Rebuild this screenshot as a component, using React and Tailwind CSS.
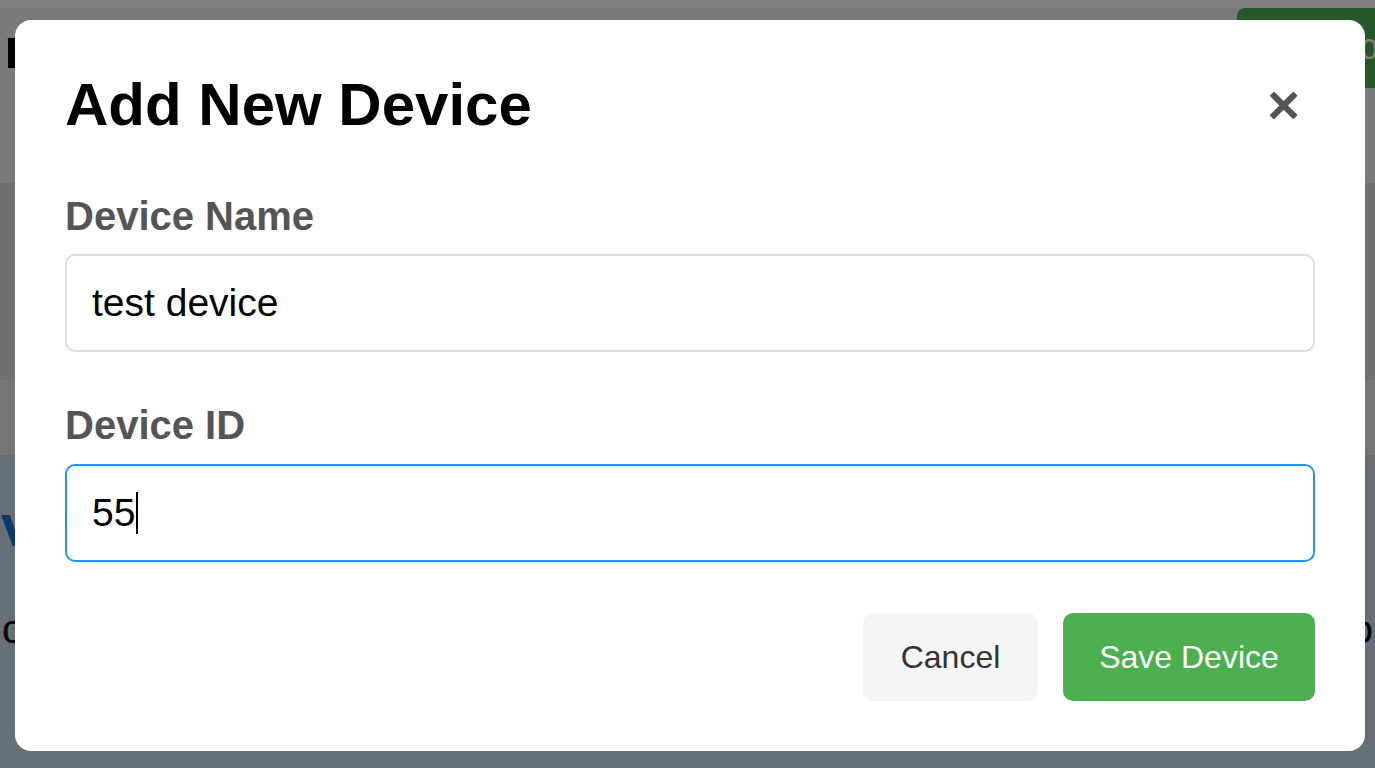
import { useState } from "react"

const FONT = { fontFamily: '"Liberation Sans", Arial, sans-serif' }

function Background() {
  return (
    <div className="min-h-screen bg-white" style={FONT}>
      <div className="pt-[8px]">
        <div className="flex h-[175px] items-start justify-between bg-[#f4f4f4]">
          <h1 className="mt-[11px] pl-[4px] text-[58px] font-bold leading-none text-black">
            n
          </h1>
          <button className="h-[80px] w-[138px] rounded-l-lg bg-[#4caf50] pl-[124px] text-left text-[30px] text-white">
            0
          </button>
        </div>
        <div className="h-[197px] bg-[#e0e0e0]" />
        <div className="h-[75px] bg-[#ececec]" />
        <div className="h-[313px] bg-[#cedcea] pt-[36px]">
          <p className="pl-[1px] text-[60px] font-bold leading-[69px] text-[#1a70d8]">v</p>
          <div className="mt-[46px] flex justify-between px-[2px] text-[40px] leading-[46px] text-black">
            <span>c</span>
            <span>o</span>
          </div>
        </div>
      </div>
    </div>
  )
}

export default function App() {
  const [name] = useState("test device")
  const [deviceId] = useState("55")

  return (
    <div className="relative">
      <Background />
      <div className="fixed inset-0 bg-black/50" style={FONT}>
        <div className="ml-[15px] mt-[20px] w-[1350px] rounded-[16px] bg-white p-[50px]">
          <div className="flex items-center justify-between">
            <h2 className="text-[60px] font-bold leading-[69px] text-black">
              Add New Device
            </h2>
            <button className="mr-[15px] text-[56px] font-bold leading-none text-[#555]">
              ×
            </button>
          </div>

          <label className="mt-[54px] block text-[40px] font-bold leading-[46px] text-[#555]">
            Device Name
          </label>
          <div className="mt-[15px] flex h-[98px] items-center rounded-[10px] border-2 border-[#ddd] px-[25px] text-[39px] text-black">
            {name}
          </div>

          <label className="mt-[50px] block text-[40px] font-bold leading-[46px] text-[#555]">
            Device ID
          </label>
          <div className="mt-[16px] flex h-[98px] items-center rounded-[10px] border-2 border-[#2196f3] px-[25px] text-[39px] text-black">
            {deviceId}
            <span className="ml-[1px] inline-block h-[42px] w-[2px] bg-black" />
          </div>

          <div className="mt-[51px] flex justify-end gap-[25px]">
            <button className="h-[88px] w-[175px] rounded-[10px] bg-[#f4f4f4] text-[32px] text-[#333]">
              Cancel
            </button>
            <button className="h-[88px] w-[252px] rounded-[10px] bg-[#4caf50] text-[32px] text-white">
              Save Device
            </button>
          </div>
        </div>
      </div>
    </div>
  )
}
